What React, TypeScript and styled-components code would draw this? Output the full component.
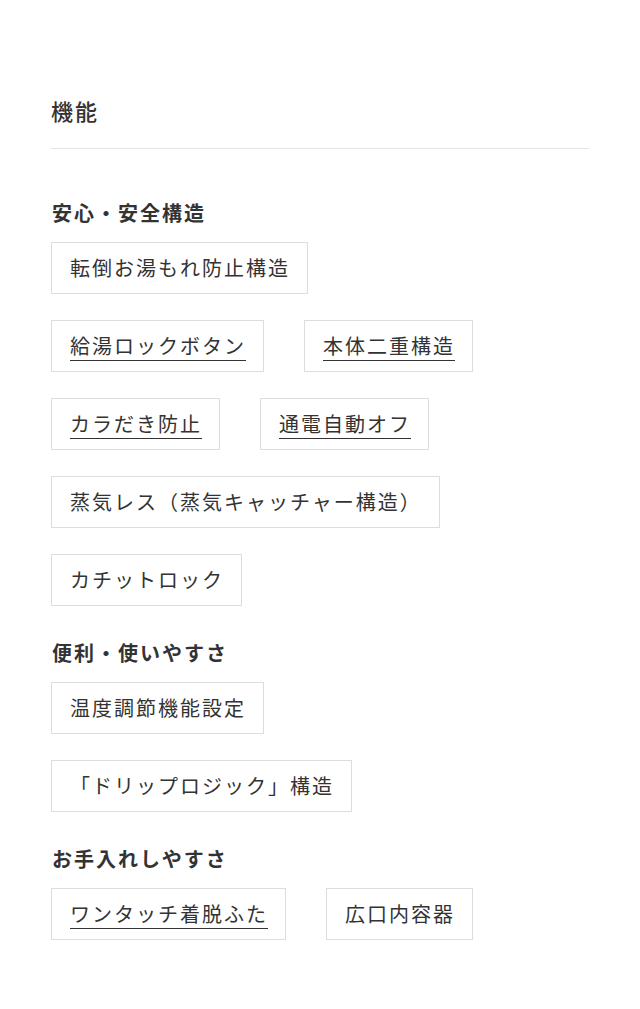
import React from "react";
import styled, { createGlobalStyle } from "styled-components";

const GlobalStyle = createGlobalStyle`
  body {
    margin: 0;
    background: #ffffff;
    font-family: "Noto Sans CJK JP", "Noto Sans", sans-serif;
    color: #333333;
  }
`;

const Page = styled.div`
  padding: 91px 51px 60px;
`;

const Title = styled.h2`
  margin: 0;
  font-size: 22px;
  font-weight: 500;
  letter-spacing: 2px;
  line-height: 38px;
  padding-bottom: 19px;
  border-bottom: 1px solid #e6e6e6;
`;

const Section = styled.section<{ $top: number }>`
  margin-top: ${(p) => p.$top}px;
`;

const Heading = styled.h3`
  margin: 0;
  font-size: 20px;
  font-weight: 700;
  letter-spacing: 2px;
  line-height: 30px;
  padding: 0 1px;
`;

const Groups = styled.div`
  display: flex;
  flex-direction: column;
  gap: 26px;
  margin-top: 14px;
`;

const TagList = styled.ul`
  display: flex;
  flex-wrap: wrap;
  gap: 26px 40px;
  margin: 0;
  padding: 0;
  list-style: none;
`;

const Tag = styled.li<{ $link?: boolean }>`
  border: 1px solid #dddddd;
  padding: 0 17px 0 18px;
  font-size: 20px;
  letter-spacing: 2px;
  line-height: 50px;
  color: #333333;
  text-decoration: ${(p) => (p.$link ? "underline" : "none")};
  text-underline-offset: 6px;
  text-decoration-thickness: 1px;
  white-space: nowrap;
`;

type Item = { label: string; link?: boolean };

const sections: { title: string; top: number; groups: Item[][] }[] = [
  {
    title: "安心・安全構造",
    top: 49,
    groups: [
      [{ label: "転倒お湯もれ防止構造" }],
      [
        { label: "給湯ロックボタン", link: true },
        { label: "本体二重構造", link: true },
        { label: "カラだき防止", link: true },
        { label: "通電自動オフ", link: true },
        { label: "蒸気レス（蒸気キャッチャー構造）" },
        { label: "カチットロック" },
      ],
    ],
  },
  {
    title: "便利・使いやすさ",
    top: 32,
    groups: [
      [{ label: "温度調節機能設定" }, { label: "「ドリップロジック」構造" }],
    ],
  },
  {
    title: "お手入れしやすさ",
    top: 32,
    groups: [
      [{ label: "ワンタッチ着脱ふた", link: true }, { label: "広口内容器" }],
    ],
  },
];

const App = () => {
  return (
    <>
      <GlobalStyle />
      <Page>
        <Title>機能</Title>
        {sections.map((s) => (
          <Section key={s.title} $top={s.top}>
            <Heading>{s.title}</Heading>
            <Groups>
              {s.groups.map((g, i) => (
                <TagList key={i}>
                  {g.map((t) => (
                    <Tag key={t.label} $link={t.link}>
                      {t.label}
                    </Tag>
                  ))}
                </TagList>
              ))}
            </Groups>
          </Section>
        ))}
      </Page>
    </>
  );
};

export default App;
